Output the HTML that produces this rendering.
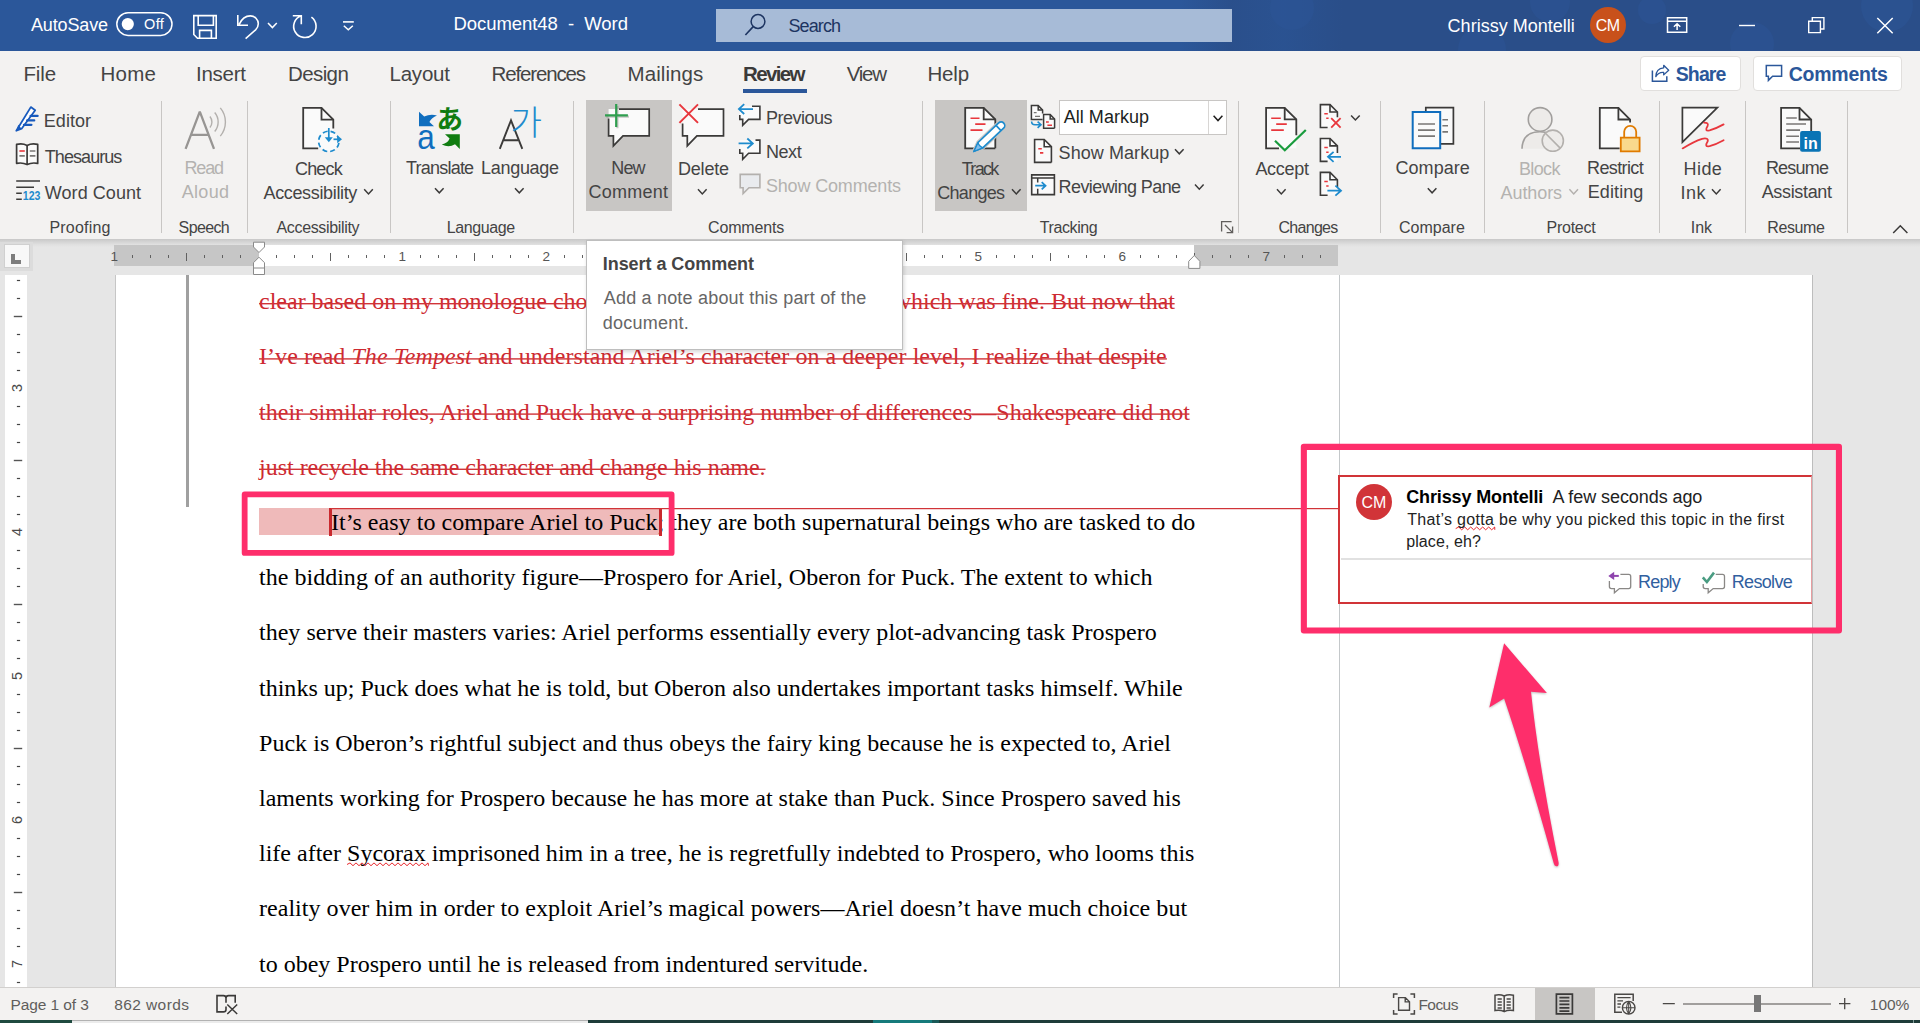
<!DOCTYPE html>
<html lang="en"><head><meta charset="utf-8"><title>Document48 - Word</title>
<style>

html,body{margin:0;padding:0;background:#e6e6e6;}
#app{position:relative;width:1920px;height:1023px;overflow:hidden;background:#e6e6e6;font-family:"Liberation Sans",sans-serif;}
#app div,#app svg,#app span.a{position:absolute;}
.t{white-space:pre;line-height:1;z-index:5;}
.sep{width:1px;top:101px;height:132px;background:#c8c6c4;}
.hl{background:#c8c6c4;}
svg{overflow:visible;display:block;}
.d{left:0;white-space:pre;font-family:"Liberation Serif",serif;font-size:24px;line-height:1;color:#000;z-index:3;}
.del{color:#cd2a31;}
.sq{text-decoration:underline wavy #e8282d;text-decoration-thickness:1px;text-underline-offset:3px;text-decoration-skip-ink:none;}

</style></head>
<body>
<div id="app">
<div style="left:0px;top:0px;width:1920px;height:51px;background:#2b579a;"></div>
<div style="left:1180px;top:0px;width:740px;height:51px;background:linear-gradient(90deg,rgba(42,78,138,0) 0,rgba(42,78,137,.85) 7%,rgba(42,79,139,.6) 14%,rgba(42,78,137,1) 22%,rgba(42,78,137,1) 100%);"></div>
<svg style="left:1232px;top:0" width="688" height="51" viewBox="0 0 688 51"><g fill="#2c5597" opacity=".5"><circle cx="60" cy="8" r="22"/><circle cx="250" cy="50" r="24"/><circle cx="318" cy="2" r="20"/><circle cx="520" cy="44" r="22"/><circle cx="655" cy="6" r="26"/><circle cx="420" cy="10" r="14"/></g></svg>
<div style="left:716px;top:9px;width:516px;height:33px;background:#a7bbd7;"></div>
<svg style="left:0;top:0" width="200" height="51" viewBox="0 0 200 51"><rect x="116.8" y="12.8" width="55.2" height="22.6" rx="11.3" fill="none" stroke="#fff" stroke-width="1.5"/><circle cx="127.8" cy="24.1" r="6.1" fill="#fff"/></svg>
<div style="left:1589.5px;top:6.5px;width:36px;height:36px;background:#c8511b;border-radius:50%;"></div>
<div style="left:0px;top:51px;width:1920px;height:188px;background:#f3f2f1;"></div>
<div style="left:0px;top:239px;width:1920px;height:8px;background:linear-gradient(#c8c8c8,#d4d4d4 35%,#e0e0e0 70%,#e6e6e6);"></div>
<div style="left:743px;top:88.5px;width:64px;height:4.2px;background:#2b579a;"></div>
<div class="hl" style="left:585.8px;top:100px;width:86px;height:110.8px;"></div>
<div class="hl" style="left:935px;top:100px;width:91.7px;height:110.8px;"></div>
<div class="sep" style="left:161px"></div>
<div class="sep" style="left:247px"></div>
<div class="sep" style="left:390px"></div>
<div class="sep" style="left:573px"></div>
<div class="sep" style="left:922px"></div>
<div class="sep" style="left:1238px"></div>
<div class="sep" style="left:1380px"></div>
<div class="sep" style="left:1484px"></div>
<div class="sep" style="left:1659px"></div>
<div class="sep" style="left:1745px"></div>
<div class="sep" style="left:1847px"></div>
<div style="left:1059px;top:100.4px;width:165.5px;height:33px;background:#fff;border:1px solid #c8c6c4;box-sizing:content-box;"></div>
<div style="left:1208px;top:101px;width:1px;height:33px;background:#d8d6d4;"></div>
<div style="left:1640.3px;top:55.6px;width:100.4px;height:35px;background:#fff;border:1px solid #e1dfdd;border-radius:4px;box-sizing:border-box;"></div>
<div style="left:1753.4px;top:55.6px;width:148.3px;height:35px;background:#fff;border:1px solid #e1dfdd;border-radius:4px;box-sizing:border-box;"></div>
<div style="left:0px;top:242px;width:33px;height:29.4px;background:#dcdcdc;"></div>
<div style="left:3.5px;top:243.6px;width:26.6px;height:24.6px;background:#f8f8f8;border:1px solid #d0d0d0;box-sizing:border-box;"></div>
<div style="left:11.4px;top:253.8px;width:3.9px;height:10px;background:#7d7d7d;"></div>
<div style="left:11.4px;top:259.7px;width:9.7px;height:4.1px;background:#7d7d7d;"></div>
<div style="left:114px;top:245px;width:145px;height:21px;background:#c6c6c6;"></div>
<div style="left:259px;top:245px;width:935px;height:21px;background:#fff;"></div>
<div style="left:1194px;top:245px;width:144px;height:21px;background:#c6c6c6;"></div>
<svg style="left:0;top:245px;z-index:2" width="1400" height="32" viewBox="0 0 1400 32"><rect x="132" y="10" width="1" height="3" fill="#606060"/><rect x="150" y="10" width="1" height="3" fill="#606060"/><rect x="168" y="10" width="1" height="3" fill="#606060"/><rect x="186" y="8" width="1" height="8" fill="#606060"/><rect x="204" y="10" width="1" height="3" fill="#606060"/><rect x="222" y="10" width="1" height="3" fill="#606060"/><rect x="240" y="10" width="1" height="3" fill="#606060"/><rect x="276" y="10" width="1" height="3" fill="#606060"/><rect x="294" y="10" width="1" height="3" fill="#606060"/><rect x="312" y="10" width="1" height="3" fill="#606060"/><rect x="330" y="8" width="1" height="8" fill="#606060"/><rect x="348" y="10" width="1" height="3" fill="#606060"/><rect x="366" y="10" width="1" height="3" fill="#606060"/><rect x="384" y="10" width="1" height="3" fill="#606060"/><rect x="420" y="10" width="1" height="3" fill="#606060"/><rect x="438" y="10" width="1" height="3" fill="#606060"/><rect x="456" y="10" width="1" height="3" fill="#606060"/><rect x="474" y="8" width="1" height="8" fill="#606060"/><rect x="492" y="10" width="1" height="3" fill="#606060"/><rect x="510" y="10" width="1" height="3" fill="#606060"/><rect x="528" y="10" width="1" height="3" fill="#606060"/><rect x="564" y="10" width="1" height="3" fill="#606060"/><rect x="582" y="10" width="1" height="3" fill="#606060"/><rect x="600" y="10" width="1" height="3" fill="#606060"/><rect x="618" y="8" width="1" height="8" fill="#606060"/><rect x="636" y="10" width="1" height="3" fill="#606060"/><rect x="654" y="10" width="1" height="3" fill="#606060"/><rect x="672" y="10" width="1" height="3" fill="#606060"/><rect x="708" y="10" width="1" height="3" fill="#606060"/><rect x="726" y="10" width="1" height="3" fill="#606060"/><rect x="744" y="10" width="1" height="3" fill="#606060"/><rect x="762" y="8" width="1" height="8" fill="#606060"/><rect x="780" y="10" width="1" height="3" fill="#606060"/><rect x="798" y="10" width="1" height="3" fill="#606060"/><rect x="816" y="10" width="1" height="3" fill="#606060"/><rect x="852" y="10" width="1" height="3" fill="#606060"/><rect x="870" y="10" width="1" height="3" fill="#606060"/><rect x="888" y="10" width="1" height="3" fill="#606060"/><rect x="906" y="8" width="1" height="8" fill="#606060"/><rect x="924" y="10" width="1" height="3" fill="#606060"/><rect x="942" y="10" width="1" height="3" fill="#606060"/><rect x="960" y="10" width="1" height="3" fill="#606060"/><rect x="996" y="10" width="1" height="3" fill="#606060"/><rect x="1014" y="10" width="1" height="3" fill="#606060"/><rect x="1032" y="10" width="1" height="3" fill="#606060"/><rect x="1050" y="8" width="1" height="8" fill="#606060"/><rect x="1068" y="10" width="1" height="3" fill="#606060"/><rect x="1086" y="10" width="1" height="3" fill="#606060"/><rect x="1104" y="10" width="1" height="3" fill="#606060"/><rect x="1140" y="10" width="1" height="3" fill="#606060"/><rect x="1158" y="10" width="1" height="3" fill="#606060"/><rect x="1176" y="10" width="1" height="3" fill="#606060"/><rect x="1194" y="8" width="1" height="8" fill="#606060"/><rect x="1212" y="10" width="1" height="3" fill="#606060"/><rect x="1230" y="10" width="1" height="3" fill="#606060"/><rect x="1248" y="10" width="1" height="3" fill="#606060"/><rect x="1284" y="10" width="1" height="3" fill="#606060"/><rect x="1302" y="10" width="1" height="3" fill="#606060"/><rect x="1320" y="10" width="1" height="3" fill="#606060"/><path d="M253.5 -2.8h11v4.8l-5.5 5.5l-5.5 -5.5z" fill="#fff" stroke="#8a8a8a"/><path d="M259 12.2l5.5 5.5v11.8h-11v-11.8z" fill="#fff" stroke="#8a8a8a"/><path d="M253.5 23h11" stroke="#8a8a8a" fill="none"/><path d="M1188.7 23.4v-7.1l5.6 -5.8l5.6 5.8v7.1z" fill="#fff" stroke="#8a8a8a"/></svg>
<div style="left:5px;top:275px;width:22px;height:712px;background:#fff;"></div>
<svg style="left:0;top:0" width="30" height="1023" viewBox="0 0 30 1023"><rect x="16.9" y="279.9" width="3.2" height="1.2" fill="#444"/><rect x="16.9" y="297.9" width="3.2" height="1.2" fill="#444"/><rect x="13.8" y="315.8" width="8.4" height="1.4" fill="#555"/><rect x="16.9" y="333.9" width="3.2" height="1.2" fill="#444"/><rect x="16.9" y="351.9" width="3.2" height="1.2" fill="#444"/><rect x="16.9" y="369.9" width="3.2" height="1.2" fill="#444"/><text x="0" y="0" transform="translate(22 388.0) rotate(-90)" text-anchor="middle" font-family="Liberation Sans, sans-serif" font-size="14.5" fill="#4a4a4a">3</text><rect x="16.9" y="405.9" width="3.2" height="1.2" fill="#444"/><rect x="16.9" y="423.9" width="3.2" height="1.2" fill="#444"/><rect x="16.9" y="441.9" width="3.2" height="1.2" fill="#444"/><rect x="13.8" y="459.8" width="8.4" height="1.4" fill="#555"/><rect x="16.9" y="477.9" width="3.2" height="1.2" fill="#444"/><rect x="16.9" y="495.9" width="3.2" height="1.2" fill="#444"/><rect x="16.9" y="513.9" width="3.2" height="1.2" fill="#444"/><text x="0" y="0" transform="translate(22 532.0) rotate(-90)" text-anchor="middle" font-family="Liberation Sans, sans-serif" font-size="14.5" fill="#4a4a4a">4</text><rect x="16.9" y="549.9" width="3.2" height="1.2" fill="#444"/><rect x="16.9" y="567.9" width="3.2" height="1.2" fill="#444"/><rect x="16.9" y="585.9" width="3.2" height="1.2" fill="#444"/><rect x="13.8" y="603.8" width="8.4" height="1.4" fill="#555"/><rect x="16.9" y="621.9" width="3.2" height="1.2" fill="#444"/><rect x="16.9" y="639.9" width="3.2" height="1.2" fill="#444"/><rect x="16.9" y="657.9" width="3.2" height="1.2" fill="#444"/><text x="0" y="0" transform="translate(22 676.0) rotate(-90)" text-anchor="middle" font-family="Liberation Sans, sans-serif" font-size="14.5" fill="#4a4a4a">5</text><rect x="16.9" y="693.9" width="3.2" height="1.2" fill="#444"/><rect x="16.9" y="711.9" width="3.2" height="1.2" fill="#444"/><rect x="16.9" y="729.9" width="3.2" height="1.2" fill="#444"/><rect x="13.8" y="747.8" width="8.4" height="1.4" fill="#555"/><rect x="16.9" y="765.9" width="3.2" height="1.2" fill="#444"/><rect x="16.9" y="783.9" width="3.2" height="1.2" fill="#444"/><rect x="16.9" y="801.9" width="3.2" height="1.2" fill="#444"/><text x="0" y="0" transform="translate(22 820.0) rotate(-90)" text-anchor="middle" font-family="Liberation Sans, sans-serif" font-size="14.5" fill="#4a4a4a">6</text><rect x="16.9" y="837.9" width="3.2" height="1.2" fill="#444"/><rect x="16.9" y="855.9" width="3.2" height="1.2" fill="#444"/><rect x="16.9" y="873.9" width="3.2" height="1.2" fill="#444"/><rect x="13.8" y="891.8" width="8.4" height="1.4" fill="#555"/><rect x="16.9" y="909.9" width="3.2" height="1.2" fill="#444"/><rect x="16.9" y="927.9" width="3.2" height="1.2" fill="#444"/><rect x="16.9" y="945.9" width="3.2" height="1.2" fill="#444"/><text x="0" y="0" transform="translate(22 964.0) rotate(-90)" text-anchor="middle" font-family="Liberation Sans, sans-serif" font-size="14.5" fill="#4a4a4a">7</text><rect x="16.9" y="981.9" width="3.2" height="1.2" fill="#444"/></svg>
<div style="left:115px;top:275px;width:1px;height:712px;background:#c6c6c6;"></div>
<div style="left:116px;top:275px;width:1696px;height:712px;background:#fff;"></div>
<div style="left:1339px;top:275px;width:1px;height:712px;background:#c4c8ca;"></div>
<div style="left:1812px;top:275px;width:1px;height:712px;background:#bdbdbd;"></div>
<div style="left:186px;top:275px;width:3px;height:232px;background:#a0a0a0;"></div>
<div style="left:0px;top:987px;width:1920px;height:33px;background:#f3f2f1;border-top:1px solid #d2d0ce;box-sizing:border-box;"></div>
<div class="hl" style="left:1535px;top:988px;width:60px;height:32px;"></div>
<div style="left:1683px;top:1003px;width:148px;height:1.5px;background:#a19f9d;"></div>
<div style="left:1753.5px;top:994.5px;width:7.5px;height:17.5px;background:#777;"></div>
<div style="left:0px;top:1019.6px;width:1920px;height:3.4px;background:#1e3c39;"></div>
<div style="left:0px;top:1019.6px;width:72px;height:3.4px;background:#1f4a3f;"></div>
<div style="left:72px;top:1019.6px;width:516px;height:3.4px;background:#ececec;"></div>
<div style="left:72px;top:1019.6px;width:516px;height:1.2px;background:#b2b2b2;"></div>
<div style="left:873px;top:1019.6px;width:59px;height:3.4px;background:#157a7b;"></div>
<div style="left:932px;top:1019.6px;width:7px;height:3.4px;background:#1a5a58;"></div>
<div style="left:1912.5px;top:1019.6px;width:1.5px;height:3.4px;background:#7d9a97;"></div>
<div style="left:258.75px;top:508.25px;width:401.75px;height:26.25px;background:#efbaba;z-index:1;"></div>
<div style="left:329.3px;top:508px;width:2.7px;height:27.7px;background:#c9292e;z-index:4;"></div>
<div style="left:659.2px;top:508px;width:2.7px;height:27.7px;background:#c9292e;z-index:4;"></div>
<div style="left:331px;top:508px;width:1008px;height:1px;background:#d13438;z-index:4;"></div>
<div style="left:331px;top:509px;width:1008px;height:1px;background:rgba(209,52,56,.22);z-index:4;"></div>
<div class="d" style="left:259px;top:289.28px"><span class="del">clear based on my monologue choice of Puck, </span></div>
<div class="d" style="left:auto;right:745px;top:289.28px"><span class="del">which was fine. But now that</span></div>
<div class="d" style="left:259px;top:344.48px;letter-spacing:0.051px"><span class="del">I’ve read <i>The Tempest</i> and understand Ariel’s character on a deeper level, I realize that despite</span></div>
<div class="d" style="left:259px;top:399.68px;letter-spacing:0.0253px"><span class="del">their similar roles, Ariel and Puck have a surprising number of differences—Shakespeare did not</span></div>
<div class="d" style="left:259px;top:454.88px;letter-spacing:-0.0096px"><span class="del">just recycle the same character and change his name.</span></div>
<div class="d" style="left:331px;top:510.08px;letter-spacing:0.0367px">It’s easy to compare Ariel to Puck; they are both supernatural beings who are tasked to do</div>
<div class="d" style="left:259px;top:565.28px;letter-spacing:0.0231px">the bidding of an authority figure—Prospero for Ariel, Oberon for Puck. The extent to which</div>
<div class="d" style="left:259px;top:620.48px;letter-spacing:0.0138px">they serve their masters varies: Ariel performs essentially every plot-advancing task Prospero</div>
<div class="d" style="left:259px;top:675.68px;letter-spacing:0.0105px">thinks up; Puck does what he is told, but Oberon also undertakes important tasks himself. While</div>
<div class="d" style="left:259px;top:730.88px;letter-spacing:0.0354px">Puck is Oberon’s rightful subject and thus obeys the fairy king because he is expected to, Ariel</div>
<div class="d" style="left:259px;top:786.08px;letter-spacing:0.0075px">laments working for Prospero because he has more at stake than Puck. Since Prospero saved his</div>
<div class="d" style="left:259px;top:841.28px;letter-spacing:0.0101px">life after Sycorax imprisoned him in a tree, he is regretfully indebted to Prospero, who looms this</div>
<div class="d" style="left:259px;top:896.48px;letter-spacing:0.0372px">reality over him in order to exploit Ariel’s magical powers—Ariel doesn’t have much choice but</div>
<div class="d" style="left:259px;top:951.68px;letter-spacing:0.0px">to obey Prospero until he is released from indentured servitude.</div>
<svg style="left:0;top:0;z-index:4" width="1920" height="1023"><path d="M347 864.5L350 862.9L353 865.7L356 862.9L359 865.7L362 862.9L365 865.7L368 862.9L371 865.7L374 862.9L377 865.7L380 862.9L383 865.7L386 862.9L389 865.7L392 862.9L395 865.7L398 862.9L401 865.7L404 862.9L407 865.7L410 862.9L413 865.7L416 862.9L419 865.7L422 862.9L425 865.7L428 862.9L428.5 865.7" fill="none" stroke="#e8282d" stroke-width="1"/></svg>
<svg style="left:0;top:0;z-index:4" width="1920" height="1023" viewBox="0 0 1920 1023"><rect x="259" y="303.00" width="915.6" height="1.4" fill="#d13438"/><rect x="259" y="358.20" width="907.9" height="1.4" fill="#d13438"/><rect x="259" y="413.40" width="930.4" height="1.4" fill="#d13438"/><rect x="259" y="468.60" width="506.5" height="1.4" fill="#d13438"/></svg>
<div style="left:586px;top:240px;width:317px;height:110px;background:#fff;border:1px solid #bebebe;box-sizing:border-box;box-shadow:1px 2px 4px rgba(0,0,0,.16);z-index:30;"></div>
<div style="left:1338.4px;top:474.8px;width:474px;height:129.2px;background:#fff;border:2px solid #d13438;border-right:1px solid #e79da0;box-sizing:border-box;z-index:2;"></div>
<div style="left:1341px;top:558px;width:470px;height:1.5px;background:#e1e1e1;z-index:3;"></div>
<div style="left:1356px;top:483.5px;width:36px;height:36px;background:#d13438;border-radius:50%;z-index:3;"></div>
<svg style="left:0;top:0;z-index:4" width="1920" height="1023"><path d="M1455.7 528.6L1458.7 527.0L1461.7 529.8000000000001L1464.7 527.0L1467.7 529.8000000000001L1470.7 527.0L1473.7 529.8000000000001L1476.7 527.0L1479.7 529.8000000000001L1482.7 527.0L1485.7 529.8000000000001L1488.7 527.0L1491.7 529.8000000000001L1494.7 527.0L1494.8 529.8000000000001" fill="none" stroke="#e8282d" stroke-width="1"/></svg>
<svg style="left:0;top:0;z-index:40" width="1920" height="1023" viewBox="0 0 1920 1023"><rect x="244.65" y="494.40" width="426.95" height="58.50" fill="none" stroke="#fe2e6b" stroke-width="5.8" stroke-linejoin="round"/><rect x="1303.85" y="446.85" width="535.10" height="183.60" fill="none" stroke="#fe2e6b" stroke-width="6.1" stroke-linejoin="round"/></svg>
<svg style="left:0;top:0;z-index:41" width="1920" height="1023" viewBox="0 0 1920 1023"><path d="M1504.1 643.2L1546.9 693.1L1531 691.8Q1538 760 1558.6 862.5Q1559 866.5 1556.3 866.3Q1554.3 866 1553.8 863.5Q1525 760 1504.1 698.4L1489.3 707.6Z" fill="#fe2e6b" style="filter:drop-shadow(0 1px 1px rgba(0,0,0,.25))"/></svg>
<svg style="left:0;top:0;z-index:6" width="1920" height="250" viewBox="0 0 1920 250"><path d="M193.8 15.6H216.2V38.2H197.5L193.8 34.5Z M198.2 15.6V25.2H213.4V15.6 M199.6 38.2V30.4H211.4V38.2" fill="none" stroke="#fff" stroke-width="1.6"/><path d="M237.8 15V25.2H248 M239.2 24.4Q243 15.9 250.4 15.9A7.9 7.9 0 0 1 258.3 23.8Q258.3 27.3 255.6 29.8L245.6 38.6" fill="none" stroke="#fff" stroke-width="1.6"/><path d="M268 23l4.4 4.6l4.4 -4.6" fill="none" stroke="#fff" stroke-width="1.5"/><path d="M292.8 15.7H301.3V24.2 M301.3 15.7A11.2 11.2 0 1 0 311.4 17.2" fill="none" stroke="#fff" stroke-width="1.6"/><path d="M343 21.9H353.8" fill="none" stroke="#fff" stroke-width="1.6"/><path d="M343.8 25.8l4.5 4l4.5 -4" fill="none" stroke="#fff" stroke-width="1.5"/><circle cx="758" cy="21.5" r="6.9" fill="none" stroke="#1d3461" stroke-width="1.5"/><path d="M753.2 26.6L745.4 35" stroke="#1d3461" stroke-width="1.6" fill="none"/><path d="M1667.5 17.7H1686.7V32.3H1667.5Z M1667.5 21.3H1686.7 M1677.1 30V24 M1673.9 26.8L1677.1 23.7L1680.3 26.8" fill="none" stroke="#fff" stroke-width="1.5"/><path d="M1739 25.5H1755" fill="none" stroke="#fff" stroke-width="1.4"/><path d="M1808.7 21.2H1820.4V32.6H1808.7Z M1812.3 21V17.6H1823.9V29H1820.6" fill="none" stroke="#fff" stroke-width="1.4"/><path d="M1877.3 18L1892.7 33.2 M1892.7 18L1877.3 33.2" fill="none" stroke="#fff" stroke-width="1.5"/><path d="M16.3 130.7L30.8 107.1L35.2 110.3L21.6 128.7Z" fill="#fff" stroke="#185abd" stroke-width="1.8" stroke-linejoin="round"/><path d="M16.3 130.7L18.3 124.8L21.6 128.7Z" fill="#185abd"/><path d="M30.6 115.9H37.6 M27.2 120.4H34.2 M24 124.8H31.4" stroke="#185abd" stroke-width="2.3" stroke-linecap="round" fill="none"/><path d="M16.6 144.4Q22.5 143 27.1 145.4Q31.7 143 37.7 144.4V163.4Q31.7 162.2 27.1 164.6Q22.5 162.2 16.6 163.4Z" fill="#fafafa" stroke="#3b3a39" stroke-width="1.7" stroke-linejoin="round"/><path d="M27.1 145.4V164.6" stroke="#3b3a39" stroke-width="1.7"/><path d="M19.4 151H24.8" stroke="#e8373d" stroke-width="1.6"/><path d="M29.8 151H35.4M19.4 155.9H24.8M29.8 155.9H35.4" stroke="#797775" stroke-width="1.6"/><path d="M16.2 181H40 M16.2 187.2H34 M16.2 193.3H21.8 M16.2 199.3H21.8" stroke="#3b3a39" stroke-width="1.6"/><text x="22.8" y="199.8" font-family="Liberation Sans, sans-serif" font-weight="700" font-size="12.2" fill="#1e8bcd" textLength="17.6" lengthAdjust="spacingAndGlyphs">123</text><path d="M185.6 148.8L199.8 111.6L214 148.8 M191.2 134.9H208.4" fill="none" stroke="#979593" stroke-width="2.3" stroke-linejoin="bevel"/><path d="M209.9 116.5A8.5 8.5 0 0 1 209.9 127.5" fill="none" stroke="#b3b0ad" stroke-width="1.4"/><path d="M214.7 112.5A14.8 14.8 0 0 1 214.7 131.5" fill="none" stroke="#b3b0ad" stroke-width="1.4"/><path d="M220.3 107.9A22 22 0 0 1 220.3 136.1" fill="none" stroke="#b3b0ad" stroke-width="1.4"/><path d="M321.5 107.8H303.2V148.3H333.3V119.6Z" fill="#fafafa" stroke="none"/><path d="M333.3 128.5V119.6L321.5 107.8H303.2V148.3H318.2" fill="none" stroke="#3b3a39" stroke-width="1.8" stroke-linejoin="miter"/><path d="M321.5 107.8V119.6H333.3" fill="none" stroke="#3b3a39" stroke-width="1.8"/><circle cx="328.8" cy="141.4" r="10.2" fill="#fafafa" stroke="#1e8bcd" stroke-width="1.7" stroke-dasharray="5 3.01" stroke-dashoffset="6.5"/><path d="M328.8 128V139" stroke="#1e8bcd" stroke-width="1.7"/><path d="M324.8 137.2H332.8L328.8 142.2Z" fill="#1e8bcd"/><path d="M333.5 139.3H339" stroke="#1e8bcd" stroke-width="1.7"/><path d="M337.2 135.3L342 139.3L337.2 143.3Z" fill="#1e8bcd"/><path d="M364.2 189.3l4.3 4.6l4.3 -4.6" fill="none" stroke="#3b3a39" stroke-width="1.5"/><path d="M419 111.7V126.3H434L429.4 122Q431.5 117.6 437 115.4Q430.2 113.4 424.2 116.6Z" fill="#106ebe"/><text x="417.2" y="148.9" font-family="Liberation Sans, sans-serif" font-size="34.5" fill="#106ebe" textLength="17.5" lengthAdjust="spacingAndGlyphs">a</text><text x="436.6" y="129.4" font-family="Noto Sans CJK JP, IPAGothic, sans-serif" font-weight="700" font-size="26.5" fill="#107c10">あ</text><path d="M445 134.2H459.8V148.9L455 144.2Q449 148.3 441.8 144.6Q448 143 449.6 138.6Z" fill="#107c10"/><path d="M435 188.2l4.3 4.6l4.3 -4.6" fill="none" stroke="#3b3a39" stroke-width="1.5"/><path d="M499.8 148.8L511 120.4L522.3 148.8 M504 140.3H518" fill="none" stroke="#3b3a39" stroke-width="1.9"/><text x="510.2" y="135.4" font-family="Noto Sans CJK KR, NanumGothic, sans-serif" font-weight="300" font-size="34.5" fill="#1e8bcd">가</text><path d="M515 188.2l4.3 4.6l4.3 -4.6" fill="none" stroke="#3b3a39" stroke-width="1.5"/></svg>
<svg style="left:0;top:0;z-index:6" width="1920" height="250" viewBox="0 0 1920 250"><path d="M608.6 109.1H649.2V135.9H623.0L613.4 145.9V135.9H608.6Z" fill="#fafafa" stroke="none"/><path d="M619 109.1H649.2V135.9H623.0L613.4 145.9V135.9H608.6V118.5" fill="none" stroke="#3b3a39" stroke-width="1.7"/><path d="M617.4 106V128.2 M606.2 116.6H629" stroke="#8a8886" stroke-width="2.2" opacity=".45"/><path d="M616.2 104V126.9 M605 115.4H627.9" stroke="#2f9e4f" stroke-width="2.2"/><path d="M682.6 109.1H723.5V135.9H696.9000000000001L687.3000000000001 145.9V135.9H682.6Z" fill="#fafafa" stroke="none"/><path d="M698 109.1H723.5V135.9H696.9000000000001L687.3000000000001 145.9V135.9H682.6V123.6" fill="none" stroke="#3b3a39" stroke-width="1.7"/><path d="M679.4 104.4L698 122.9 M698 104.4L679.4 122.9" stroke="#e8373d" stroke-width="2"/><path d="M698 189.3l4.3 4.6l4.3 -4.6" fill="none" stroke="#3b3a39" stroke-width="1.5"/><path d="M739.8 106.2H759.9V119.4H748.5999999999999L742.6999999999999 125.4V119.4H739.8Z" fill="#fafafa" stroke="none"/><path d="M752 106.2H759.9V119.4H748.5999999999999L742.6999999999999 125.4V119.4H739.8V115" fill="none" stroke="#3b3a39" stroke-width="1.6"/><path d="M738.9 109.1H753 M744.2 104.2L738.9 109.1L744.2 114" fill="none" stroke="#1e8bcd" stroke-width="1.8"/><path d="M739.8 140.1H759.9V153.3H748.5999999999999L742.6999999999999 159.3V153.3H739.8Z" fill="#fafafa" stroke="none"/><path d="M755.5 140.1H759.9V153.3H748.5999999999999L742.6999999999999 159.3V153.3H739.8V149" fill="none" stroke="#3b3a39" stroke-width="1.6"/><path d="M738.6 143.4H752.6 M747.3 138.5L752.8 143.4L747.3 148.3" fill="none" stroke="#1e8bcd" stroke-width="1.8"/><path d="M740.2 174.4H759.9V187.7H749.0L743.1 193.5V187.7H740.2Z" fill="#e9ebee" stroke="none"/><path d="M740.2 174.4H759.9V187.7H749.0L743.1 193.5V187.7H740.2Z" fill="none" stroke="#b3b0ad" stroke-width="1.6"/><path d="M983.6999999999999 107.8H965.2V148.3H995.3V119.39999999999999Z" fill="#fafafa" stroke="none"/><path d="M995.3 148.3V119.39999999999999L983.6999999999999 107.8H965.2V148.3H995.3" fill="none" stroke="#3b3a39" stroke-width="1.8" stroke-linejoin="miter"/><path d="M983.6999999999999 107.8V119.39999999999999H995.3" fill="none" stroke="#3b3a39" stroke-width="1.8"/><path d="M970.5 118.2H979.5 M975.2 124.1H985.5 M970.5 130.1H982.5" stroke="#e8373d" stroke-width="1.6"/><g transform="translate(974 151.3) rotate(-43.5)"><path d="M0 0L9 -3.6H37.4A3.6 3.6 0 0 1 37.4 3.6H9Z" fill="#fff" stroke="#c8c6c4" stroke-width="3.8" stroke-linejoin="round"/><path d="M0 0L9 -3.6H37.4A3.6 3.6 0 0 1 37.4 3.6H9Z" fill="#fff" stroke="#1e8bcd" stroke-width="1.7" stroke-linejoin="round"/><path d="M0 0L9 -3.6Q7 0 9 3.6Z" fill="#83beec" stroke="#1e8bcd" stroke-width="1.2"/><path d="M33.8 -3.6V3.6" stroke="#1e8bcd" stroke-width="1.7"/></g><path d="M1012 189.3l4.3 4.6l4.3 -4.6" fill="none" stroke="#3b3a39" stroke-width="1.5"/><path d="M1038.1999999999998 105.6H1031.4V119.4H1042.6V110.0Z" fill="#fafafa" stroke="none"/><path d="M1042.6 113.5V110.0L1038.1999999999998 105.6H1031.4V119.4H1042.6" fill="none" stroke="#3b3a39" stroke-width="1.5" stroke-linejoin="miter"/><path d="M1038.1999999999998 105.6V110.0H1042.6" fill="none" stroke="#3b3a39" stroke-width="1.5"/><path d="M1033.8 112.6H1036.6 M1035 116.4H1040" stroke="#797775" stroke-width="1.3"/><path d="M1050.1999999999998 114.6H1043.6V128.3H1054.6V119.0Z" fill="#fafafa" stroke="none"/><path d="M1054.6 128.3V119.0L1050.1999999999998 114.6H1043.6V128.3H1054.6" fill="none" stroke="#3b3a39" stroke-width="1.5" stroke-linejoin="miter"/><path d="M1050.1999999999998 114.6V119.0H1054.6" fill="none" stroke="#3b3a39" stroke-width="1.5"/><path d="M1046 122H1048.8 M1047.4 125.2H1052" stroke="#e8373d" stroke-width="1.4"/><path d="M1031.6 121.4Q1031.6 124.7 1035 124.7H1040.6 M1037.6 121.6L1041 124.7L1037.6 127.9" fill="none" stroke="#1e8bcd" stroke-width="1.6"/><path d="M1213.6 115.8l4.4 4.8l4.4 -4.8" fill="none" stroke="#201f1e" stroke-width="1.5"/><path d="M1044.2 139.5H1034.6V162.4H1051.4V146.7Z" fill="#fafafa" stroke="none"/><path d="M1051.4 162.4V146.7L1044.2 139.5H1034.6V162.4H1051.4" fill="none" stroke="#3b3a39" stroke-width="1.6" stroke-linejoin="miter"/><path d="M1044.2 139.5V146.7H1051.4" fill="none" stroke="#3b3a39" stroke-width="1.6"/><path d="M1038.3 148.8H1041.8 M1040 152.9H1043.3" stroke="#e8373d" stroke-width="1.6"/><path d="M1175 149.2l4.3 4.6l4.3 -4.6" fill="none" stroke="#3b3a39" stroke-width="1.5"/><path d="M1031.7 174.9H1054.4V194.6H1031.7Z" fill="#fafafa" stroke="#3b3a39" stroke-width="1.6"/><path d="M1031.7 177.9H1054.4 M1037.7 177.9V182.6 M1037.7 188.8V194.6" stroke="#3b3a39" stroke-width="1.5" fill="none"/><path d="M1035.2 185.7H1045.4 M1041.7 182.1L1045.6 185.7L1041.7 189.3" fill="none" stroke="#1e8bcd" stroke-width="1.7"/><path d="M1195 184.6l4.3 4.6l4.3 -4.6" fill="none" stroke="#3b3a39" stroke-width="1.5"/><path d="M1221.6 231.6V221.6H1231.6 M1225 225L1232.4 232.4 M1232.6 226.6V232.6H1226.6" fill="none" stroke="#605e5c" stroke-width="1.3"/><path d="M1284.7 107.8H1266.1V148.3H1296.3V119.39999999999999Z" fill="#fafafa" stroke="none"/><path d="M1296.3 135.2V119.39999999999999L1284.7 107.8H1266.1V148.3H1279" fill="none" stroke="#3b3a39" stroke-width="1.8" stroke-linejoin="miter"/><path d="M1284.7 107.8V119.39999999999999H1296.3" fill="none" stroke="#3b3a39" stroke-width="1.8"/><path d="M1271.2 118.2H1280.8 M1276.2 124.1H1286.8 M1271.2 130.1H1283.8" stroke="#e8373d" stroke-width="1.6"/><path d="M1275 140.8L1284.8 150.2L1305.8 130" fill="none" stroke="#1a9c3e" stroke-width="2.2"/><path d="M1277 189.3l4.3 4.6l4.3 -4.6" fill="none" stroke="#3b3a39" stroke-width="1.5"/><path d="M1330.0 104.6H1320.4V127.5H1337.4V112.0Z" fill="#fafafa" stroke="none"/><path d="M1337.4 117.19999999999999V112.0L1330.0 104.6H1320.4V127.5H1327.6" fill="none" stroke="#3b3a39" stroke-width="1.6" stroke-linejoin="miter"/><path d="M1330.0 104.6V112.0H1337.4" fill="none" stroke="#3b3a39" stroke-width="1.6"/><path d="M1324.3 113.69999999999999H1327.8 M1326.2 118.3H1328.6" stroke="#e8373d" stroke-width="1.5"/><path d="M1331.2 118.1L1340.6 127.6 M1340.6 118.1L1331.2 127.6" stroke="#e8373d" stroke-width="1.8"/><path d="M1330.0 138.5H1320.4V161.4H1337.4V145.9Z" fill="#fafafa" stroke="none"/><path d="M1337.4 153.1V145.9L1330.0 138.5H1320.4V161.4H1327.6" fill="none" stroke="#3b3a39" stroke-width="1.6" stroke-linejoin="miter"/><path d="M1330.0 138.5V145.9H1337.4" fill="none" stroke="#3b3a39" stroke-width="1.6"/><path d="M1324.3 147.6H1327.8 M1326.2 152.2H1328.6" stroke="#e8373d" stroke-width="1.5"/><path d="M1328 156.8H1341 M1333.6 151.8L1328 156.8L1333.6 161.8" fill="none" stroke="#1e8bcd" stroke-width="1.8"/><path d="M1330.0 172.4H1320.4V195.3H1337.4V179.8Z" fill="#fafafa" stroke="none"/><path d="M1337.4 187.0V179.8L1330.0 172.4H1320.4V195.3H1327.6" fill="none" stroke="#3b3a39" stroke-width="1.6" stroke-linejoin="miter"/><path d="M1330.0 172.4V179.8H1337.4" fill="none" stroke="#3b3a39" stroke-width="1.6"/><path d="M1324.3 181.5H1327.8 M1326.2 186.1H1328.6" stroke="#e8373d" stroke-width="1.5"/><path d="M1327.4 190.70000000000002H1340.6 M1335.4 185.70000000000002L1341 190.70000000000002L1335.4 195.70000000000002" fill="none" stroke="#1e8bcd" stroke-width="1.8"/><path d="M1351.1 115.4l4.3 4.6l4.3 -4.6" fill="none" stroke="#3b3a39" stroke-width="1.5"/><path d="M1425.8 107.6H1453.4V143.9H1425.8Z" fill="#fafafa" stroke="#3b3a39" stroke-width="1.7"/><path d="M1442.4 119.7H1448 M1442.4 125.8H1448 M1442.4 131.9H1448" stroke="#797775" stroke-width="1.6"/><path d="M1412.7 112H1440.2V148.2H1412.7Z" fill="#fafafa" stroke="#106ebe" stroke-width="2"/><path d="M1418 124H1435 M1418 130.1H1435 M1418 136.2H1435" stroke="#797775" stroke-width="1.7"/><path d="M1427.8 188.2l4.3 4.6l4.3 -4.6" fill="none" stroke="#3b3a39" stroke-width="1.5"/><path d="M1522 148.8Q1522.5 131.8 1540 131.8Q1551 131.8 1556 140V148.8Z" fill="#edebe9"/><path d="M1522 148.8Q1522.5 131.8 1540 131.8Q1546 131.8 1549.5 134" fill="none" stroke="#a19f9d" stroke-width="1.6"/><circle cx="1540.1" cy="119.4" r="11.8" fill="#edebe9" stroke="#a19f9d" stroke-width="1.6"/><circle cx="1552.8" cy="140.7" r="10.6" fill="#edebe9" stroke="#b3b0ad" stroke-width="1.6"/><path d="M1545.4 133.3L1560.2 148.1" stroke="#b3b0ad" stroke-width="1.6"/><path d="M1569.4 189.3l4.3 4.6l4.3 -4.6" fill="none" stroke="#b3b0ad" stroke-width="1.5"/><path d="M1618.3999999999999 107.8H1599.8V148.3H1630.1V119.5Z" fill="#fafafa" stroke="none"/><path d="M1630.1 122.6V119.5L1618.3999999999999 107.8H1599.8V148.3H1619.6" fill="none" stroke="#3b3a39" stroke-width="1.8" stroke-linejoin="miter"/><path d="M1618.3999999999999 107.8V119.5H1630.1" fill="none" stroke="#3b3a39" stroke-width="1.8"/><path d="M1624.2 137.5V131.8A6 6 0 0 1 1636.2 131.8V137.5" fill="none" stroke="#e07b00" stroke-width="1.8"/><path d="M1620.8 137.6H1639.6V151.4H1620.8Z" fill="#f9d98c" stroke="#e07b00" stroke-width="1.8"/><path d="M1682.4 107.6H1717.4L1682.4 142.2Z" fill="#fafafa" stroke="#3b3a39" stroke-width="1.7" stroke-linejoin="miter"/><path d="M1704 122.6Q1709 122.6 1707.6 126Q1704 131.4 1709.6 130.4Q1716 128.6 1723.6 124.4" fill="none" stroke="#e8373d" stroke-width="1.8" stroke-linecap="round"/><path d="M1682.6 148.4Q1694 141.4 1702 138.8Q1709 137.4 1707.6 141.6Q1704 147.2 1709.6 146.2Q1716 144.4 1723.6 140.2" fill="none" stroke="#e8373d" stroke-width="1.8" stroke-linecap="round"/><path d="M1712 189.3l4.3 4.6l4.3 -4.6" fill="none" stroke="#3b3a39" stroke-width="1.5"/><path d="M1799.5 107.8H1781.1V148.3H1811.2V119.5Z" fill="#fafafa" stroke="none"/><path d="M1811.2 131V119.5L1799.5 107.8H1781.1V148.3H1800" fill="none" stroke="#3b3a39" stroke-width="1.8" stroke-linejoin="miter"/><path d="M1799.5 107.8V119.5H1811.2" fill="none" stroke="#3b3a39" stroke-width="1.8"/><path d="M1786.2 118H1796.8 M1786.2 124H1806 M1786.2 130.1H1800 M1786.2 136.2H1799 M1786.2 142H1799" stroke="#797775" stroke-width="1.6"/><rect x="1800.1" y="130.9" width="20.8" height="20.9" rx="2" fill="#0a74b5"/><text x="1803.6" y="148.9" font-family="Liberation Sans, sans-serif" font-weight="700" font-size="16" fill="#fff" textLength="14.2" lengthAdjust="spacingAndGlyphs">in</text><path d="M1893.2 233L1900.3 225.8L1907.4 233" fill="none" stroke="#3b3a39" stroke-width="1.5"/><path d="M1652.4 70.4V81.3H1666.8V76.2" fill="none" stroke="#2b579a" stroke-width="1.5"/><path d="M1663.7 65.3L1668.7 70.2L1663.7 74.9V72.4Q1658.4 72 1655.8 76.6Q1656 68.4 1663.7 67.8Z" fill="none" stroke="#2b579a" stroke-width="1.3" stroke-linejoin="round"/><path d="M1766.3 65.4H1781.6V76.3H1772.6L1768.4 80.4V76.3H1766.3Z" fill="none" stroke="#2b579a" stroke-width="1.5"/></svg>
<svg style="left:0;top:0;z-index:6" width="1920" height="1023" viewBox="0 0 1920 1023"><path d="M226 1002.7V998Q226 995.6 223.5 995.6H217V1011.9H223.5Q226 1011.9 226 1009.5V1006.4 M226 998Q226 995.6 228.5 995.6H235.2V1002.7" fill="none" stroke="#3b3a39" stroke-width="1.6"/><path d="M227.3 1004.5L237.2 1014 M237.2 1004.5L227.3 1014" stroke="#3b3a39" stroke-width="1.5"/><path d="M1393.6 998V994H1397.6 M1410.4 994H1414.4V998 M1414.4 1010V1014H1410.4 M1397.6 1014H1393.6V1010" fill="none" stroke="#4a4846" stroke-width="1.5"/><path d="M1398.6 997.6H1405.4L1409.5 1001.7V1010.3H1398.6Z M1405.2 997.6V1001.9H1409.5" fill="none" stroke="#4a4846" stroke-width="1.4"/><path d="M1495 995.2Q1500 993.9 1504.2 996Q1508.4 993.9 1513.4 995.2V1010.6Q1508.4 1009.5 1504.2 1011.6Q1500 1009.5 1495 1010.6Z M1504.2 996V1011.6" fill="none" stroke="#4a4846" stroke-width="1.5"/><path d="M1497.6 999H1501.8 M1497.6 1002H1501.8 M1497.6 1005H1501.8 M1497.6 1008H1501.8 M1506.6 999H1510.8 M1506.6 1002H1510.8 M1506.6 1005H1510.8 M1506.6 1008H1510.8" stroke="#4a4846" stroke-width="1.3"/><path d="M1556.4 994.2H1572.4V1013.8H1556.4Z" fill="none" stroke="#3b3a39" stroke-width="1.7"/><path d="M1559.4 997.6H1569.4 M1559.4 1001H1569.4 M1559.4 1004.4H1569.4 M1559.4 1007.8H1569.4 M1559.4 1011.2H1569.4" stroke="#3b3a39" stroke-width="1.7"/><path d="M1622 1012.2H1614.8V994.2H1633.2V1001" fill="none" stroke="#4a4846" stroke-width="1.5"/><path d="M1617.4 997.6H1630.6 M1617.4 1000.8H1623 M1617.4 1004H1621 M1617.4 1007.2H1620.4" stroke="#4a4846" stroke-width="1.3"/><circle cx="1628.7" cy="1007.7" r="6.3" fill="#f3f2f1" stroke="#4a4846" stroke-width="1.4"/><path d="M1622.4 1007.7H1635 M1628.7 1001.4V1014 M1628.7 1001.4Q1624.4 1007.7 1628.7 1014 M1628.7 1001.4Q1633 1007.7 1628.7 1014" fill="none" stroke="#4a4846" stroke-width="1.1"/><path d="M1662.8 1003.6H1674.8 M1839 1003.6H1850.4 M1844.7 997.9V1009.3" stroke="#4a4846" stroke-width="1.3"/></svg><svg style="left:0;top:0;z-index:7" width="1920" height="1023" viewBox="0 0 1920 1023"><path d="M1620.4 574.4H1628.7Q1630.7 574.4 1630.7 576.4V586.6Q1630.7 588.6 1628.7 588.6H1619.4L1614.4 592.8V588.6H1611.4Q1609.4 588.6 1609.4 586.6V581" fill="none" stroke="#8a8886" stroke-width="1.3"/><path d="M1715.7 574.4H1722.5Q1724.5 574.4 1724.5 576.4V586.6Q1724.5 588.6 1722.5 588.6H1713.2L1708.2 592.8V588.6H1705.2Q1703.2 588.6 1703.2 586.6V584" fill="none" stroke="#8a8886" stroke-width="1.3"/><path d="M1611 575.9H1618.8" stroke="#8e44ad" stroke-width="2"/><path d="M1614.2 571.8L1608.3 575.9L1614.2 580Z" fill="#8e44ad"/><path d="M1702.8 577.4L1706.9 582L1714 572.6" fill="none" stroke="#4a9c82" stroke-width="2.6"/></svg>
<div class="t" style="left:31.0px;top:16.00px;font-size:18px;color:#fff;letter-spacing:-0.143px;">AutoSave</div>
<div class="t" style="left:144.0px;top:17.00px;font-size:14.5px;color:#fff;letter-spacing:0.375px;">Off</div>
<div class="t" style="left:453.5px;top:15.00px;font-size:18.5px;color:#fff;letter-spacing:-0.056px;">Document48  -  Word</div>
<div class="t" style="left:788.5px;top:17.00px;font-size:18px;color:#1d3461;letter-spacing:-0.9px;">Search</div>
<div class="t" style="left:1447.6px;top:17.00px;font-size:18px;color:#fff;letter-spacing:0.013px;">Chrissy Montelli</div>
<div class="t" style="left:1595.7px;top:18.00px;font-size:16px;color:#fff;letter-spacing:-0.5px;">CM</div>
<div class="t" style="left:23.4px;top:64.00px;font-size:20.5px;color:#444444;letter-spacing:-0.067px;">File</div>
<div class="t" style="left:100.5px;top:64.00px;font-size:20.5px;color:#444444;letter-spacing:0.233px;">Home</div>
<div class="t" style="left:196.0px;top:64.00px;font-size:20.5px;color:#444444;letter-spacing:-0.28px;">Insert</div>
<div class="t" style="left:288.0px;top:64.00px;font-size:20.5px;color:#444444;letter-spacing:-0.6px;">Design</div>
<div class="t" style="left:389.5px;top:64.00px;font-size:20.5px;color:#444444;letter-spacing:-0.22px;">Layout</div>
<div class="t" style="left:491.5px;top:64.00px;font-size:20.5px;color:#444444;letter-spacing:-1.144px;">References</div>
<div class="t" style="left:627.6px;top:64.00px;font-size:20.5px;color:#444444;letter-spacing:0.057px;">Mailings</div>
<div class="t" style="left:846.7px;top:64.00px;font-size:20.5px;color:#444444;letter-spacing:-1.233px;">View</div>
<div class="t" style="left:927.4px;top:64.00px;font-size:20.5px;color:#444444;letter-spacing:-0.133px;">Help</div>
<div class="t" style="left:743.0px;top:64.00px;font-size:20.5px;color:#3b3a39;letter-spacing:-1.64px;font-weight:700;">Review</div>
<div class="t" style="left:1675.7px;top:65.00px;font-size:19.5px;color:#2b579a;letter-spacing:-0.863px;font-weight:700;">Share</div>
<div class="t" style="left:1788.8px;top:65.00px;font-size:19.5px;color:#2b579a;letter-spacing:-0.257px;font-weight:700;">Comments</div>
<div class="t" style="left:43.8px;top:112.00px;font-size:18px;color:#444444;letter-spacing:0.04px;">Editor</div>
<div class="t" style="left:44.8px;top:148.00px;font-size:18px;color:#444444;letter-spacing:-0.938px;">Thesaurus</div>
<div class="t" style="left:44.8px;top:184.00px;font-size:18px;color:#444444;letter-spacing:0.056px;">Word Count</div>
<div class="t" style="left:184.4px;top:159.00px;font-size:18px;color:#b4b2b0;letter-spacing:-1.133px;">Read</div>
<div class="t" style="left:181.7px;top:183.00px;font-size:18px;color:#b4b2b0;letter-spacing:0.325px;">Aloud</div>
<div class="t" style="left:295.0px;top:160.00px;font-size:18px;color:#444444;letter-spacing:-0.825px;">Check</div>
<div class="t" style="left:263.5px;top:184.00px;font-size:18px;color:#444444;letter-spacing:-0.35px;">Accessibility</div>
<div class="t" style="left:406.0px;top:159.00px;font-size:18px;color:#444444;letter-spacing:-0.781px;">Translate</div>
<div class="t" style="left:481.0px;top:159.00px;font-size:18px;color:#444444;letter-spacing:-0.286px;">Language</div>
<div class="t" style="left:611.3px;top:159.00px;font-size:18px;color:#444444;letter-spacing:-0.85px;">New</div>
<div class="t" style="left:588.4px;top:183.00px;font-size:18px;color:#444444;letter-spacing:0.267px;">Comment</div>
<div class="t" style="left:678.0px;top:160.00px;font-size:18px;color:#444444;letter-spacing:-0.2px;">Delete</div>
<div class="t" style="left:765.9px;top:109.00px;font-size:18px;color:#444444;letter-spacing:-0.486px;">Previous</div>
<div class="t" style="left:765.9px;top:143.00px;font-size:18px;color:#444444;letter-spacing:-0.4px;">Next</div>
<div class="t" style="left:765.9px;top:177.00px;font-size:18px;color:#b4b2b0;letter-spacing:-0.158px;">Show Comments</div>
<div class="t" style="left:961.7px;top:160.00px;font-size:18px;color:#444444;letter-spacing:-1.675px;">Track</div>
<div class="t" style="left:937.3px;top:184.00px;font-size:18px;color:#444444;letter-spacing:-0.717px;">Changes</div>
<div class="t" style="left:1063.75px;top:108.00px;font-size:18px;color:#201f1e;letter-spacing:0.028px;">All Markup</div>
<div class="t" style="left:1058.6px;top:144.00px;font-size:18px;color:#444444;letter-spacing:0.07px;">Show Markup</div>
<div class="t" style="left:1058.6px;top:178.00px;font-size:18px;color:#444444;letter-spacing:-0.585px;">Reviewing Pane</div>
<div class="t" style="left:1255.4px;top:160.00px;font-size:18px;color:#444444;letter-spacing:-0.28px;">Accept</div>
<div class="t" style="left:1395.5px;top:159.00px;font-size:18px;color:#444444;letter-spacing:0.042px;">Compare</div>
<div class="t" style="left:1519.0px;top:160.00px;font-size:18px;color:#b4b2b0;letter-spacing:-0.65px;">Block</div>
<div class="t" style="left:1500.6px;top:184.00px;font-size:18px;color:#b4b2b0;letter-spacing:-0.1px;">Authors</div>
<div class="t" style="left:1587.0px;top:159.00px;font-size:18px;color:#444444;letter-spacing:-0.607px;">Restrict</div>
<div class="t" style="left:1587.75px;top:183.00px;font-size:18px;color:#444444;letter-spacing:0.092px;">Editing</div>
<div class="t" style="left:1683.6px;top:160.00px;font-size:18px;color:#444444;letter-spacing:0.4px;">Hide</div>
<div class="t" style="left:1680.5px;top:184.00px;font-size:18px;color:#444444;letter-spacing:0.45px;">Ink</div>
<div class="t" style="left:1765.9px;top:159.00px;font-size:18px;color:#444444;letter-spacing:-0.78px;">Resume</div>
<div class="t" style="left:1761.7px;top:183.00px;font-size:18px;color:#444444;letter-spacing:-0.338px;">Assistant</div>
<div class="t" style="left:49.4px;top:220.00px;font-size:16px;color:#444444;letter-spacing:0.2px;">Proofing</div>
<div class="t" style="left:178.6px;top:220.00px;font-size:16px;color:#444444;letter-spacing:-0.62px;">Speech</div>
<div class="t" style="left:276.5px;top:220.00px;font-size:16px;color:#444444;letter-spacing:-0.342px;">Accessibility</div>
<div class="t" style="left:446.7px;top:220.00px;font-size:16px;color:#444444;letter-spacing:-0.386px;">Language</div>
<div class="t" style="left:708.0px;top:220.00px;font-size:16px;color:#444444;letter-spacing:-0.143px;">Comments</div>
<div class="t" style="left:1039.8px;top:220.00px;font-size:16px;color:#444444;letter-spacing:-0.4px;">Tracking</div>
<div class="t" style="left:1278.4px;top:220.00px;font-size:16px;color:#444444;letter-spacing:-0.683px;">Changes</div>
<div class="t" style="left:1399.0px;top:220.00px;font-size:16px;color:#444444;letter-spacing:0.0px;">Compare</div>
<div class="t" style="left:1546.5px;top:220.00px;font-size:16px;color:#444444;letter-spacing:-0.25px;">Protect</div>
<div class="t" style="left:1690.7px;top:220.00px;font-size:16px;color:#444444;letter-spacing:0.0px;">Ink</div>
<div class="t" style="left:1767.3px;top:220.00px;font-size:16px;color:#444444;letter-spacing:-0.42px;">Resume</div>
<div class="t" style="left:602.75px;top:255.00px;font-size:18px;color:#444;letter-spacing:-0.05px;font-weight:700;z-index:31;">Insert a Comment</div>
<div class="t" style="left:603.75px;top:289.00px;font-size:18px;color:#666;letter-spacing:0.195px;z-index:31;">Add a note about this part of the</div>
<div class="t" style="left:602.75px;top:314.00px;font-size:18px;color:#666;letter-spacing:0.25px;z-index:31;">document.</div>
<div class="t" style="left:1361.5px;top:495.00px;font-size:16px;color:#fff;letter-spacing:0.0px;">CM</div>
<div class="t" style="left:1406.25px;top:488.00px;font-size:18px;color:#000;letter-spacing:-0.13px;font-weight:700;">Chrissy Montelli</div>
<div class="t" style="left:1552.5px;top:488.00px;font-size:18px;color:#222;letter-spacing:-0.078px;">A few seconds ago</div>
<div class="t" style="left:1407.25px;top:512.00px;font-size:16px;color:#222;letter-spacing:0.305px;">That’s gotta be why you picked this topic in the first</div>
<div class="t" style="left:1406.25px;top:534.00px;font-size:16px;color:#222;letter-spacing:0.083px;">place, eh?</div>
<div class="t" style="left:1638.0px;top:573.00px;font-size:18px;color:#31609f;letter-spacing:-0.8px;">Reply</div>
<div class="t" style="left:1731.75px;top:573.00px;font-size:18px;color:#31609f;letter-spacing:-0.675px;">Resolve</div>
<div class="t" style="left:10.5px;top:997.00px;font-size:15.5px;color:#605e5c;letter-spacing:-0.1px;">Page 1 of 3</div>
<div class="t" style="left:114.2px;top:997.00px;font-size:15.5px;color:#605e5c;letter-spacing:0.412px;">862 words</div>
<div class="t" style="left:1418.4px;top:997.00px;font-size:15.5px;color:#605e5c;letter-spacing:-0.55px;">Focus</div>
<div class="t" style="left:1869.8px;top:997.00px;font-size:15.5px;color:#605e5c;letter-spacing:-0.017px;">100%</div>
<div class="t" style="left:110.5px;top:250.00px;font-size:13.5px;color:#555;letter-spacing:0px;">1</div>
<div class="t" style="left:398.5px;top:250.00px;font-size:13.5px;color:#555;letter-spacing:0px;">1</div>
<div class="t" style="left:542.5px;top:250.00px;font-size:13.5px;color:#555;letter-spacing:0px;">2</div>
<div class="t" style="left:686.5px;top:250.00px;font-size:13.5px;color:#555;letter-spacing:0px;">3</div>
<div class="t" style="left:831.5px;top:250.00px;font-size:13.5px;color:#555;letter-spacing:0px;">4</div>
<div class="t" style="left:974.5px;top:250.00px;font-size:13.5px;color:#555;letter-spacing:0px;">5</div>
<div class="t" style="left:1118.5px;top:250.00px;font-size:13.5px;color:#555;letter-spacing:0px;">6</div>
<div class="t" style="left:1262.5px;top:250.00px;font-size:13.5px;color:#555;letter-spacing:0px;">7</div>
</div>
</body></html>
